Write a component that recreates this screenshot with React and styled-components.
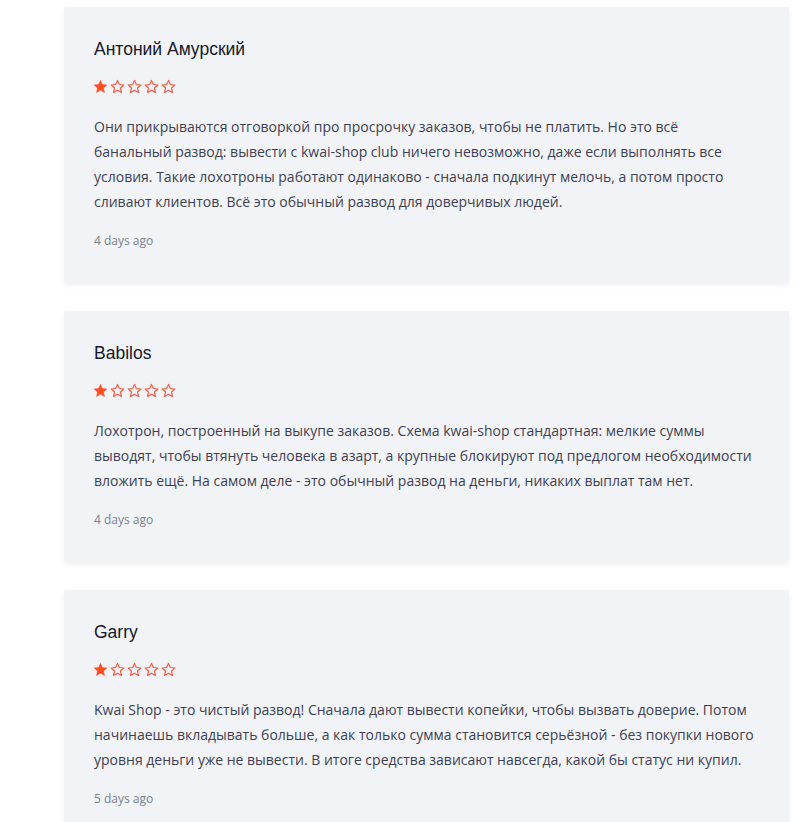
import React from "react";
import styled, { createGlobalStyle } from "styled-components";

const GlobalStyle = createGlobalStyle`
  body {
    margin: 0;
    background: #ffffff;
    font-family: "Open Sans", "Liberation Sans", sans-serif;
  }
`;

const List = styled.div`
  display: flex;
  flex-direction: column;
  gap: 29px;
  padding: 7px 0 40px 64px;
`;

const Card = styled.article`
  width: 725px;
  box-sizing: border-box;
  padding: 30px 30px 32px;
  background: #f2f3f7;
  box-shadow: 0 3px 6px rgba(30, 30, 60, 0.07);
`;

const Name = styled.h3`
  margin: 0;
  font-family: "Liberation Sans", Arial, sans-serif;
  font-weight: 400;
  font-size: 17.5px;
  line-height: 24px;
  color: #15172a;
`;

const Stars = styled.div`
  display: flex;
  gap: 2px;
  margin: 18px 0 0 -1px;
  height: 15px;
`;

const Text = styled.p`
  margin: 20px 0 0;
  font-size: 14px;
  line-height: 25px;
  color: #3d3f52;
`;

const Date = styled.div`
  margin-top: 18px;
  font-size: 12px;
  line-height: 18px;
  color: #7c7f8c;
`;

const Star = ({ filled }) => (
  <svg width="15" height="15" viewBox="0 0 24 24">
    <path
      d="M12 2.2l2.95 6.6 7.2.75-5.4 4.85 1.55 7.1L12 17.85 5.7 21.5l1.55-7.1-5.4-4.85 7.2-.75z"
      fill={filled ? "#ff4a1c" : "none"}
      stroke="#ff5a45"
      strokeWidth={filled ? 1 : 1.9}
      strokeLinejoin="round"
    />
  </svg>
);

const reviews = [
  {
    name: "Антоний Амурский",
    rating: 1,
    text: "Они прикрываются отговоркой про просрочку заказов, чтобы не платить. Но это всё банальный развод: вывести с kwai-shop club ничего невозможно, даже если выполнять все условия. Такие лохотроны работают одинаково - сначала подкинут мелочь, а потом просто сливают клиентов. Всё это обычный развод для доверчивых людей.",
    date: "4 days ago",
  },
  {
    name: "Babilos",
    rating: 1,
    text: "Лохотрон, построенный на выкупе заказов. Схема kwai-shop стандартная: мелкие суммы выводят, чтобы втянуть человека в азарт, а крупные блокируют под предлогом необходимости вложить ещё. На самом деле - это обычный развод на деньги, никаких выплат там нет.",
    date: "4 days ago",
  },
  {
    name: "Garry",
    rating: 1,
    text: "Kwai Shop - это чистый развод! Сначала дают вывести копейки, чтобы вызвать доверие. Потом начинаешь вкладывать больше, а как только сумма становится серьёзной - без покупки нового уровня деньги уже не вывести. В итоге средства зависают навсегда, какой бы статус ни купил.",
    date: "5 days ago",
  },
];

export default function App() {
  return (
    <>
      <GlobalStyle />
      <List>
        {reviews.map((r) => (
          <Card key={r.name}>
            <Name>{r.name}</Name>
            <Stars>
              {[1, 2, 3, 4, 5].map((i) => (
                <Star key={i} filled={i <= r.rating} />
              ))}
            </Stars>
            <Text>{r.text}</Text>
            <Date>{r.date}</Date>
          </Card>
        ))}
      </List>
    </>
  );
}
